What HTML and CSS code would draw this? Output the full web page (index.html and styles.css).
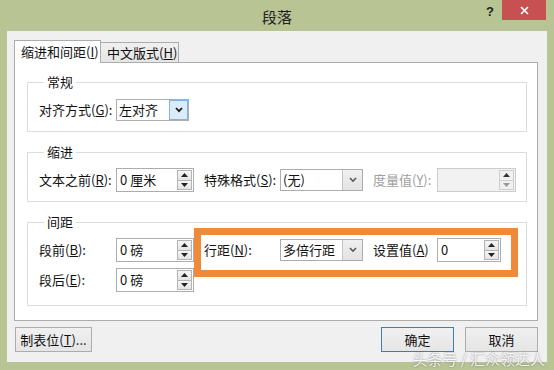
FILE: index.html
```html
<!DOCTYPE html>
<html lang="zh-CN">
<head>
    <meta charset="UTF-8">
    <title>段落</title>
    <link rel="stylesheet" href="styles.css">
</head>
<body>
    <div class="window">
        <div class="titlebar">
            <div></div>
            <div class="title">段落</div>
            <div class="controls">
                <span class="help">?</span>
                <span class="close">
                    <svg width="9" height="9" viewBox="0 0 9 9"><path d="M1 1L8 8M8 1L1 8" stroke="#fff" stroke-width="1.6" fill="none"/></svg>
                </span>
            </div>
        </div>

        <div class="client">
            <div class="tabs">
                <div class="tab active">缩进和间距(<u>I</u>)</div>
                <div class="tab">中文版式(<u>H</u>)</div>
            </div>

            <div class="panel">
                <!-- 常规 -->
                <fieldset class="group">
                    <legend>常规</legend>
                    <div class="row">
                        <span class="lbl col1">对齐方式(<u>G</u>):</span>
                        <div class="select w-align">
                            <span class="val">左对齐</span>
                            <span class="drop hot"><svg width="8" height="6" viewBox="0 0 8 6"><path d="M1 1L4 4.2L7 1" stroke="#1a1a1a" stroke-width="1.8" fill="none"/></svg></span>
                        </div>
                    </div>
                </fieldset>

                <!-- 缩进 -->
                <fieldset class="group">
                    <legend>缩进</legend>
                    <div class="row">
                        <span class="lbl col1">文本之前(<u>R</u>):</span>
                        <div class="spin w-num">
                            <span class="val">0 厘米</span>
                            <span class="spin-btns">
                                <span class="sb"><svg width="7" height="4" viewBox="0 0 7 4"><path d="M0 4L3.5 0L7 4Z" fill="#222"/></svg></span>
                                <span class="sb"><svg width="7" height="4" viewBox="0 0 7 4"><path d="M0 0L3.5 4L7 0Z" fill="#222"/></svg></span>
                            </span>
                        </div>
                        <span class="lbl col2">特殊格式(<u>S</u>):</span>
                        <div class="select w-sel">
                            <span class="val">(无)</span>
                            <span class="drop"><svg width="8" height="6" viewBox="0 0 8 6"><path d="M1 1L4 4.2L7 1" stroke="#555" stroke-width="1.6" fill="none"/></svg></span>
                        </div>
                        <span class="lbl col3 disabled">度量值(<u>Y</u>):</span>
                        <div class="spin w-measure disabled">
                            <span class="val"></span>
                            <span class="spin-btns">
                                <span class="sb"><svg width="7" height="4" viewBox="0 0 7 4"><path d="M0 4L3.5 0L7 4Z" fill="#333"/></svg></span>
                                <span class="sb"><svg width="7" height="4" viewBox="0 0 7 4"><path d="M0 0L3.5 4L7 0Z" fill="#999"/></svg></span>
                            </span>
                        </div>
                    </div>
                </fieldset>

                <!-- 间距 -->
                <fieldset class="group group-spacing">
                    <legend>间距</legend>
                    <div class="row">
                        <span class="lbl col1">段前(<u>B</u>):</span>
                        <div class="spin w-num">
                            <span class="val">0 磅</span>
                            <span class="spin-btns">
                                <span class="sb"><svg width="7" height="4" viewBox="0 0 7 4"><path d="M0 4L3.5 0L7 4Z" fill="#222"/></svg></span>
                                <span class="sb"><svg width="7" height="4" viewBox="0 0 7 4"><path d="M0 0L3.5 4L7 0Z" fill="#222"/></svg></span>
                            </span>
                        </div>
                        <span class="lbl col2">行距(<u>N</u>):</span>
                        <div class="select w-sel">
                            <span class="val">多倍行距</span>
                            <span class="drop"><svg width="8" height="6" viewBox="0 0 8 6"><path d="M1 1L4 4.2L7 1" stroke="#555" stroke-width="1.6" fill="none"/></svg></span>
                        </div>
                        <span class="lbl col3">设置值(<u>A</u>)</span>
                        <div class="spin w-value">
                            <span class="val">0</span>
                            <span class="spin-btns">
                                <span class="sb"><svg width="7" height="4" viewBox="0 0 7 4"><path d="M0 4L3.5 0L7 4Z" fill="#222"/></svg></span>
                                <span class="sb"><svg width="7" height="4" viewBox="0 0 7 4"><path d="M0 0L3.5 4L7 0Z" fill="#222"/></svg></span>
                            </span>
                        </div>
                    </div>
                    <div class="row">
                        <span class="lbl col1">段后(<u>E</u>):</span>
                        <div class="spin w-num">
                            <span class="val">0 磅</span>
                            <span class="spin-btns">
                                <span class="sb"><svg width="7" height="4" viewBox="0 0 7 4"><path d="M0 4L3.5 0L7 4Z" fill="#222"/></svg></span>
                                <span class="sb"><svg width="7" height="4" viewBox="0 0 7 4"><path d="M0 0L3.5 4L7 0Z" fill="#222"/></svg></span>
                            </span>
                        </div>
                    </div>
                </fieldset>
            </div>

            <div class="buttons">
                <button class="btn btn-tabs">制表位(<u>T</u>)...</button>
                <button class="btn btn-default">确定</button>
                <button class="btn">取消</button>
            </div>
        </div>

        <!-- 标注框 -->
        <div class="highlight"></div>
        <div class="watermark">头条号 / 汇众领达人</div>
    </div>
</body>
</html>
```

FILE: styles.css
```css
body {
    margin: 0;
    font-family: "Microsoft YaHei", "Noto Sans CJK SC", sans-serif;
    font-size: 13px;
    color: #111;
}
.window {
    position: relative;
    width: 554px;
    height: 370px;
    background: #b8c494;
    overflow: hidden;
}
.titlebar {
    height: 31px;
    display: grid;
    grid-template-columns: 1fr auto 1fr;
}
.title {
    font-size: 15px;
    line-height: 31px;
    padding-top: 1px;
    color: #222;
}
.controls {
    justify-self: end;
    display: flex;
    align-items: flex-start;
}
.help {
    font-family: "Liberation Sans", Arial, sans-serif;
    font-weight: bold;
    font-size: 13px;
    line-height: 14px;
    margin: 5px 8px 0 0;
    color: #222;
}
.close {
    width: 44px;
    height: 20px;
    margin-right: 8px;
    background: #c75050;
    display: flex;
    align-items: center;
    justify-content: center;
}
.client {
    margin: 0 7px 8px 7px;
    height: 331px;
    background: #f0f0f0;
    padding: 9px 9px 0 7px;
    box-sizing: border-box;
}
.tabs {
    display: flex;
    align-items: flex-end;
    height: 23px;
    border-bottom: 1px solid #acacac;
    box-sizing: border-box;
}
.tab {
    height: 20px;
    line-height: 19px;
    width: 78px;
    padding-left: 6px;
    border: 1px solid #acacac;
    border-bottom: none;
    border-left: none;
    background: linear-gradient(#f0f0f0, #e5e5e5);
    box-sizing: border-box;
}
.tab.active {
    width: 87px;
    height: 23px;
    line-height: 22px;
    margin-bottom: -1px;
    padding-left: 6px;
    border-left: 1px solid #acacac;
    background: #fff;
}
.panel {
    height: 258px;
    background: #fff;
    border: 1px solid #acacac;
    border-top: none;
    padding: 11px 10px 0 12px;
    box-sizing: border-box;
}
.group {
    margin: 12px 0 0 0;
    padding: 8px 10px 9px 11px;
    border: 1px solid #dcdcdc;
}
.group:first-child {
    margin-top: 0;
}
.group-spacing {
    padding-bottom: 13px;
}
.group legend {
    line-height: 16px;
    padding: 0 3px;
    margin-left: 5px;
}
.row {
    display: flex;
    align-items: center;
    height: 24px;
}
.row + .row {
    margin-top: 6px;
}
.lbl {
    white-space: nowrap;
    line-height: 16px;
}
.col1 { width: 77px; }
.col2 { width: 76px; margin-left: 10px; }
.col3 { width: 64px; margin-left: 10px; }
.disabled.lbl { color: #a0a0a0; }

.select, .spin {
    display: flex;
    border: 1px solid #abadb3;
    background: #fff;
    box-sizing: border-box;
}
.select { height: 22px; }
.spin { height: 24px; }
.val {
    flex: 1;
    padding-left: 2px;
    line-height: 20px;
    white-space: nowrap;
}
.spin .val {
    padding-left: 3px;
    line-height: 22px;
}
.drop {
    width: 19px;
    border-left: 1px solid #c3c3c3;
    background: linear-gradient(#f0f0f0, #e3e3e3);
    display: flex;
    align-items: center;
    justify-content: center;
}
.drop.hot {
    background: #dcebf9;
    border-left: none;
    box-shadow: inset 0 0 0 1px #7eb4ea;
}
.spin-btns {
    width: 16px;
    padding: 1px 1px 1px 0;
    display: flex;
    flex-direction: column;
    box-sizing: border-box;
}
.sb {
    flex: 1;
    border: 1px solid #b4b4b4;
    background: linear-gradient(#f6f6f6, #e4e4e4);
    display: flex;
    align-items: center;
    justify-content: center;
}
.sb + .sb {
    border-top: none;
}
.spin.disabled {
    background: #f2f2f2;
    border-color: #cdcdcd;
}
.spin.disabled .sb {
    border-color: #cfcfcf;
    background: #f0f0f0;
}
.w-align { width: 73px; }
.w-num { width: 78px; }
.w-sel { width: 83px; }
.w-measure { width: 79px; }
.w-value { width: 64px; }

.buttons {
    display: flex;
    margin-top: 6px;
    padding: 0 0 0 1px;
}
.btn {
    height: 25px;
    width: 73px;
    font: inherit;
    color: #111;
    border: 1px solid #adadad;
    background: linear-gradient(#f0f0f0, #e5e5e5);
    padding: 0;
}
.btn-tabs {
    width: 77px;
}
.btn-default {
    margin-left: auto;
    margin-right: 11px;
    border-color: #3c7fb1;
}
.highlight {
    position: absolute;
    left: 194px;
    top: 228px;
    width: 324px;
    height: 49px;
    border: 7px solid #ef8a3b;
    box-sizing: border-box;
}
.watermark {
    position: absolute;
    right: 9px;
    bottom: 1px;
    font-size: 15px;
    color: rgba(255, 255, 255, 0.9);
    text-shadow: 0 0 2px rgba(0, 0, 0, 0.45);
}
```
